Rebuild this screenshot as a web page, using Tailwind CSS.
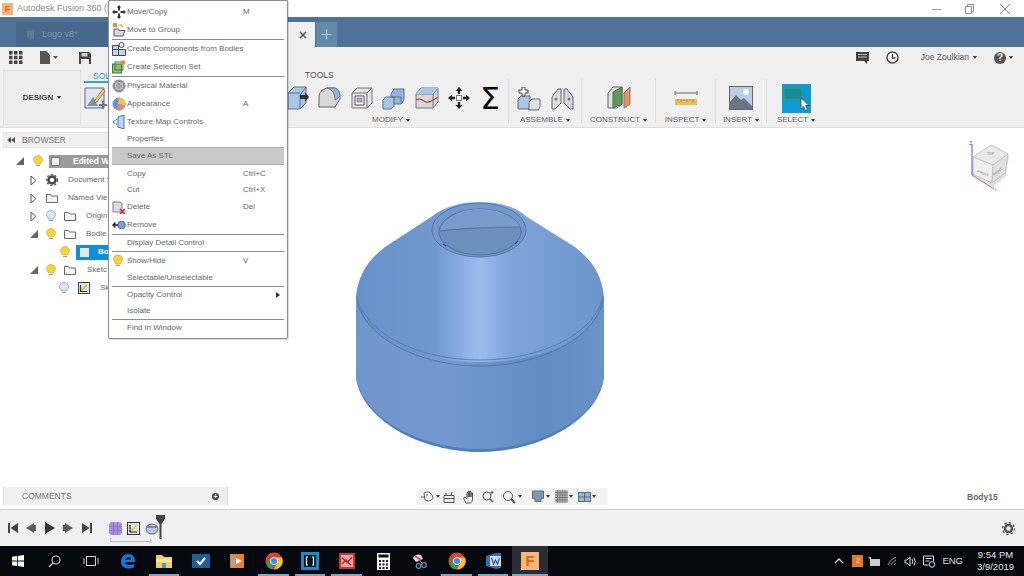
<!DOCTYPE html>
<html lang="en">
<head>
<meta charset="UTF-8">
<title>Autodesk Fusion 360</title>
<script src="https://cdn.jsdelivr.net/npm/@tailwindcss/browser@4"></script>
</head>
<body class="bg-white font-['Liberation_Sans',Arial,sans-serif] overflow-hidden">
<div class="relative w-[1024px] h-[576px] flex flex-col overflow-hidden text-[#555]">

  <!-- title bar -->
  <div class="h-[17px] bg-white flex items-center shrink-0">
    <div class="ml-[2px] w-[11px] h-[12px] bg-[#f5b27a] text-[#d8651c] text-[9px] font-bold leading-[12px] text-center">F</div>
    <span class="ml-[4px] text-[9px] text-[#888]">Autodesk Fusion 360 (E</span>
    <div class="ml-auto flex items-center text-[#888]">
      <svg width="12" height="12" class="mr-[21px]"><path d="M1 6.500h9" stroke="#999"/></svg>
      <svg width="12" height="12" class="mr-[23px]"><path d="M1.500 3.500h6v7h-6zM3.500 3.500v-2h6v7h-2" fill="none" stroke="#888"/></svg>
      <svg width="12" height="12" class="mr-[13px]"><path d="M1 1l10 10M11 1L1 11" stroke="#888"/></svg>
    </div>
  </div>

  <!-- tabs -->
  <div class="h-[30px] bg-[#4f7396] flex items-end shrink-0">
    <div class="ml-[16px] w-[272px] h-[25px] bg-[#46698b] flex items-center">
      <svg width="12" height="12" class="ml-[9px]"><path d="M2 2l7-1v9l-4 1-3-3z" fill="#64788c"/></svg>
      <span class="ml-[5px] text-[9px] text-[#7f95aa]">Logo v8*</span>
    </div>
    <div class="w-[27px] h-[25px] bg-[#f0f0f0] flex items-center justify-end pr-[7px] pt-[1px]">
      <svg width="10" height="10"><path d="M2 2l6 6M8 2L2 8" stroke="#555" stroke-width="1.600"/></svg>
    </div>
    <div class="ml-[1px] w-[21px] h-[25px] bg-[#648aa9] flex items-center justify-center">
      <svg width="11" height="11"><path d="M5.500 0.500v10M0.500 5.500h10" stroke="#b5c7d6" stroke-width="1.200"/></svg>
    </div>
  </div>

  <!-- quick access -->
  <div class="h-[21px] bg-[#f0f0f0] flex items-center shrink-0">
    <svg width="14" height="13" class="ml-[9px]" fill="#444"><path d="M0 0h3.500v3.500H0zM5 0h3.500v3.500H5zM10 0h3.500v3.500H10zM0 4.700h3.500v3.500H0zM5 4.700h3.500v3.500H5zM10 4.700h3.500v3.500H10zM0 9.400h3.500v3.500H0zM5 9.400h3.500v3.500H5zM10 9.400h3.500v3.500H10z"/></svg>
    <svg width="18" height="13" class="ml-[17px]" fill="#555"><path d="M0 0h6l4 4v9H0z"/><path d="M13 5h5l-2.500 3z"/></svg>
    <svg width="12" height="12" class="ml-[21px]"><path d="M0 0h10l2 2v10H0z" fill="#444"/><path d="M2.500 1h6v3.500h-6z" fill="#ccc"/><path d="M2 7h8v5H2z" fill="#eee"/></svg>
    <div class="ml-auto flex items-center">
      <svg width="13" height="12"><path d="M0 0h13v9h-2v3l-3-3H0z" fill="#444"/><path d="M2 2.500h9M2 5h9" stroke="#bbb"/></svg>
      <svg width="13" height="13" class="ml-[17px]"><circle cx="6.500" cy="6.500" r="5.500" fill="none" stroke="#444" stroke-width="1.400"/><path d="M6.500 3v4h3" fill="none" stroke="#444" stroke-width="1.300"/></svg>
      <span class="ml-[22px] text-[8.5px] text-[#555]">Joe Zoulkian</span>
      <span class="ml-[4px] w-0 h-0 border-x-[2.5px] border-x-transparent border-t-[3px] border-t-[#444]"></span>
      <div class="ml-[17px] w-[12px] h-[12px] rounded-full bg-[#555] text-white text-[10px] font-bold leading-[12px] text-center">?</div>
      <span class="ml-[3px] mr-[11px] w-0 h-0 border-x-[2.5px] border-x-transparent border-t-[3px] border-t-[#444]"></span>
    </div>
  </div>

  <!-- ribbon -->
  <div class="h-[60px] bg-[#f0f0f0] border-b border-[#dedede] flex shrink-0">
    <div class="ml-[3px] mt-[2px] w-[78px] h-[55px] bg-[#ededed] border border-[#e2e2e2] flex items-center justify-center gap-[4px]">
      <span class="text-[8px] font-bold text-[#444]">DESIGN</span>
      <span class="w-0 h-0 border-x-[2.5px] border-x-transparent border-t-[3px] border-t-[#333]"></span>
    </div>
    <div class="relative w-[430px] shrink-0">
      <span class="absolute left-[12px] top-[2px] text-[8.5px] text-[#2f9bd6]">SOL</span>
      <div class="absolute left-[3px] top-[13px] w-[26px] h-[2px] bg-[#35a0dc]"></div>
      <span class="absolute left-[224px] top-[1px] text-[8.5px] text-[#555]">TOOLS</span>
      <svg width="24" height="24" class="absolute left-[3px] top-[18px]"><path d="M1 2h19v20H1z" fill="#dfe6ee" stroke="#5b6b7c"/><path d="M3 20l6-9 5 9z" fill="#7c93ad"/><path d="M11 14l8-11 2 2-8 11-3 1z" fill="#f3c65c" stroke="#666" stroke-width=".6"/><path d="M19 15v8M15 19h8" stroke="#777" stroke-width="2"/></svg>

      <!-- modify icons -->
      <div class="absolute left-[206px] top-[17px] flex items-center">
        <svg width="22" height="26" viewBox="0 0 22 26"><path d="M1 8l6-6h12v16l-6 6H1z" fill="#a9c6e6" stroke="#5d7286"/><path d="M13 24V10l6-8" fill="none" stroke="#5d7286"/><path d="M1 8h12" stroke="#5d7286"/><path d="M13 10h5v-3l4 5-4 5v-3h-5z" fill="#333"/></svg>
        <svg width="24" height="24" viewBox="0 0 24 24" class="ml-[8px]"><path d="M2 21V11q0-7 8-9l8 0q5 2 5 8v3l-5 8z" fill="#d8d8d8" stroke="#666"/><path d="M10 2q8 2 8 12 3-1 5-4 0-6-5-8z" fill="#8fb6de" stroke="#666" stroke-width=".7"/></svg>
        <svg width="22" height="22" viewBox="0 0 22 22" class="ml-[10px]"><path d="M1 6l5-5h15v15l-5 5H1z" fill="#e4e4e4" stroke="#777"/><path d="M1 6h15v15M16 6l5-5" fill="none" stroke="#777"/><path d="M4 9h9v9H4z" fill="#fff" stroke="#555"/><path d="M6 11h5v4H6z" fill="#9cbcdb" stroke="#555" stroke-width=".6"/></svg>
        <svg width="24" height="24" viewBox="0 0 24 24" class="ml-[9px]"><path d="M1 14l3-3h8v9l-3 3H1z" fill="#a9c6e6" stroke="#5d7286"/><path d="M9 8l3-5h10v11l-3 4h-7v-7H9z" fill="#8fb6de" stroke="#5d7286"/><path d="M9 11h10v7" fill="none" stroke="#5d7286"/></svg>
        <svg width="24" height="22" viewBox="0 0 24 22" class="ml-[9px]"><path d="M1 7l5-6h17v14l-5 6H1z" fill="#d8d8d8" stroke="#777"/><path d="M1 7h17v14M18 7l5-6" fill="none" stroke="#777"/><path d="M6 1h17l-5 6H1z" fill="#a9c6e6"/><path d="M1 13q4-2 8 1t9-1l5-3" fill="none" stroke="#b0484e" stroke-width="1.200"/></svg>
        <svg width="22" height="22" viewBox="0 0 22 22" class="ml-[9px]"><path d="M11 0l3.500 4h-2.300v3h-2.400V4H7.500zM11 22l-3.500-4h2.300v-3h2.400v3h2.300zM0 11l4-3.500v2.300h3v2.400H4v2.300zM22 11l-4 3.500v-2.300h-3V9.800h3V7.500z" fill="#222"/><rect x="8.500" y="8.500" width="5" height="5" fill="#fff" stroke="#777"/></svg>
        <span class="ml-[10px] w-[20px] text-[31px] leading-[26px] text-center text-black font-['DejaVu_Sans',sans-serif]">Σ</span>
      </div>
      <div class="absolute left-[291px] top-[48px] flex items-center gap-[3px]">
        <span class="text-[8px] leading-none text-[#666]">MODIFY</span>
        <span class="w-0 h-0 border-x-[2.5px] border-x-transparent border-t-[3px] border-t-[#444]"></span>
      </div>
    </div>

    <!-- assemble -->
    <div class="w-[1px] h-[44px] mt-[11px] ml-[-3px] bg-[#e0e0e0]"></div>
    <div class="w-[72px] flex flex-col items-center pt-[18px] shrink-0">
      <div class="flex items-center gap-[10px] h-[26px]">
        <svg width="24" height="24" viewBox="0 0 24 24"><path d="M1 12l3-3h9v13H1z" fill="#a9c6e6" stroke="#667"/><path d="M12 15l3-3h8v8l-2 3h-9z" fill="#e2e2e2" stroke="#667"/><path d="M5 0h3v3h3v3H8v3H5V6H2V3h3z" fill="#fff" stroke="#444"/></svg>
        <svg width="23" height="22" viewBox="0 0 23 22"><path d="M1 9l6-8h3v14l-6 6H1z" fill="#ddd" stroke="#666"/><path d="M13 1h3l6 8v12h-3l-6-6z" fill="#cfd8e2" stroke="#666"/><circle cx="5" cy="11" r="1.500" fill="#777"/><circle cx="18" cy="11" r="1.500" fill="#777"/></svg>
      </div>
      <div class="mt-[4px] flex items-center gap-[3px]"><span class="text-[8px] leading-none text-[#666]">ASSEMBLE</span><span class="w-0 h-0 border-x-[2.5px] border-x-transparent border-t-[3px] border-t-[#444]"></span></div>
    </div>
    <div class="w-[1px] h-[44px] mt-[11px] bg-[#e0e0e0]"></div>

    <!-- construct -->
    <div class="w-[73px] flex flex-col items-center pt-[18px] shrink-0">
      <svg width="24" height="24" viewBox="0 0 24 24"><path d="M1 22V7l5-6h9v17l-5 4z" fill="#e3e3e3" stroke="#666"/><path d="M6 22V6l9-5v17z" fill="#5f9a55" stroke="#566"/><path d="M17 22V7l6-6v17z" fill="#e8935a" stroke="#777"/></svg>
      <div class="mt-[6px] flex items-center gap-[3px]"><span class="text-[8px] leading-none text-[#666]">CONSTRUCT</span><span class="w-0 h-0 border-x-[2.5px] border-x-transparent border-t-[3px] border-t-[#444]"></span></div>
    </div>
    <div class="w-[1px] h-[44px] mt-[11px] bg-[#e0e0e0]"></div>

    <!-- inspect -->
    <div class="w-[59px] flex flex-col items-center pt-[18px] shrink-0">
      <svg width="24" height="24" viewBox="0 0 24 24"><path d="M1 7h22M1 5v4M23 5v4" stroke="#666" fill="none"/><rect x="1" y="13" width="22" height="6" fill="#e8bf55"/><path d="M4 13v2M7 13v3M10 13v2M13 13v3M16 13v2M19 13v3" stroke="#8a6b20" stroke-width=".6"/></svg>
      <div class="mt-[6px] flex items-center gap-[3px]"><span class="text-[8px] leading-none text-[#666]">INSPECT</span><span class="w-0 h-0 border-x-[2.5px] border-x-transparent border-t-[3px] border-t-[#444]"></span></div>
    </div>
    <div class="w-[1px] h-[44px] mt-[11px] bg-[#e0e0e0]"></div>

    <!-- insert -->
    <div class="w-[50px] flex flex-col items-center pt-[18px] shrink-0">
      <svg width="24" height="24" viewBox="0 0 24 24"><rect x=".5" y=".5" width="23" height="23" fill="#b8cfe6" stroke="#666"/><circle cx="17" cy="6" r="3" fill="#f7f7f0"/><path d="M1 23V16l6-7 5 5 3-2 8 8v3z" fill="#6b7480"/></svg>
      <div class="mt-[6px] flex items-center gap-[3px]"><span class="text-[8px] leading-none text-[#666]">INSERT</span><span class="w-0 h-0 border-x-[2.5px] border-x-transparent border-t-[3px] border-t-[#444]"></span></div>
    </div>
    <div class="w-[1px] h-[44px] mt-[11px] bg-[#e0e0e0]"></div>

    <!-- select -->
    <div class="w-[58px] flex flex-col items-center pt-[18px] shrink-0">
      <svg width="29" height="29" viewBox="0 0 29 29" class="-mt-[2px] -mb-[3px]"><rect width="29" height="29" fill="#0d9bd8"/><rect x="2" y="4" width="18" height="11" fill="#1b8a9a" stroke="#3b9a5c" stroke-width="1.200"/><path d="M19 14v11l2.500-2.500 2 4 2-1-2-4h3.500z" fill="#fff" stroke="#333" stroke-width=".7"/></svg>
      <div class="mt-[6px] flex items-center gap-[3px]"><span class="text-[8px] leading-none text-[#666]">SELECT</span><span class="w-0 h-0 border-x-[2.5px] border-x-transparent border-t-[3px] border-t-[#444]"></span></div>
    </div>
  </div>

  <!-- canvas -->
  <div class="relative flex-1 bg-white">

    <!-- model -->
    <svg class="absolute left-[340px] top-[62px]" width="280" height="270" viewBox="340 190 280 270">
      <defs>
        <linearGradient id="cone" x1="0" x2="1" y1="0" y2="0">
          <stop offset="0" stop-color="#6791c8"/><stop offset=".32" stop-color="#7199d0"/><stop offset=".5" stop-color="#9cbdf0"/><stop offset=".62" stop-color="#7fa5da"/><stop offset="1" stop-color="#6c94cb"/>
        </linearGradient>
        <linearGradient id="wall" x1="0" x2="1" y1="0" y2="0">
          <stop offset="0" stop-color="#7096cc"/><stop offset=".4" stop-color="#7399ce"/><stop offset=".75" stop-color="#628cc2"/><stop offset="1" stop-color="#6a92c8"/>
        </linearGradient>
      </defs>
      <path d="M356 297V378C362 420 420 452 480 452S598 420 604 378V297Z" fill="#4f7fb8"/>
      <path d="M356 297V376C362 418 420 449 480 449S598 418 604 376V297Z" fill="url(#wall)"/>
      <path d="M356 297C358 275 368 260 385 247L431 217C445 206 462 202 480 202S515 206 527 217L575 247C592 260 602 275 604 297C600 335 550 362 480 362S360 335 356 297Z" fill="url(#cone)"/>
      <path d="M357 300C364 338 420 366 480 366S596 338 603 300" fill="none" stroke="#4e78b0" stroke-width="1"/>
      <path d="M357 296C364 334 420 360 480 360S596 334 603 296" fill="none" stroke="#577fb6" stroke-width="1"/>
      <ellipse cx="479" cy="230" rx="47" ry="27" fill="#7398cc" stroke="#5278ad"/>
      <ellipse cx="480" cy="232" rx="41" ry="23" fill="#6d8fc0" stroke="#4f75aa"/>
      <path d="M440 230C462 228 498 227 520 227C514 216 498 209 480 209S446 216 440 230Z" fill="#7a9ccb"/>
      <path d="M440 231C462 228 498 227 520 227" fill="none" stroke="#4f72a5"/>
      <path d="M443 244l3 2M515 244l3-3" stroke="#2c4f80" stroke-width="1.200"/>
    </svg>

    <!-- view cube -->
    <svg class="absolute left-[965px] top-[12px]" width="48" height="52" viewBox="0 0 48 52">
      <path d="M6 36L9 18 24 8l20 8-3 20-14 12z" fill="#c9ccd0" opacity=".6"/>
      <path d="M8 17L26 5l17 9-15 11z" fill="#e9e9e9" stroke="#c4c4c4"/>
      <path d="M8 17l20 8-1 18-19-9z" fill="#efefef" stroke="#c4c4c4"/>
      <path d="M28 25l15-11-3 19-13 10z" fill="#e0e0e0" stroke="#c4c4c4"/>
      <text x="22" y="15" font-size="3.500" fill="#777">TOP</text>
      <text x="12" y="32" font-size="3.500" fill="#777" transform="rotate(22 12 32)">FRONT</text>
      <text x="29" y="36" font-size="3.500" fill="#777" transform="rotate(-38 29 36)">RIGHT</text>
      <path d="M7 4v31" stroke="#5a5ad0" stroke-width="1"/>
      <path d="M7 35l22 14" stroke="#e06868" stroke-width="1"/>
      <text x="4" y="5" font-size="5" fill="#5555cc">Z</text>
      <text x="29" y="51" font-size="4" fill="#e06868">X</text>
    </svg>

    <!-- browser -->
    <div class="absolute left-[3px] top-[4px] w-[112px]">
      <div class="h-[16px] bg-[#f0f0f0] border border-[#e4e4e4] flex items-center pl-[3px]">
        <svg width="8" height="6" fill="#555"><path d="M4 0v6L0 3zM8 0v6L4 3z"/></svg>
        <span class="ml-[7px] text-[8.5px] text-[#777]">BROWSER</span>
      </div>
      <div class="relative h-[150px] text-[8px] text-[#666]">
        <div class="absolute left-[12px] top-[4px] w-[99px] h-[18px] flex items-center">
          <svg width="10" height="10" fill="#666"><path d="M9 1v8H1z"/></svg>
          <svg width="10" height="12" class="ml-[8px]"><path d="M5 .5C7.500 .5 9.500 2.300 9.500 4.700 9.500 6.500 8 7.300 7.500 9H2.500C2 7.300 .5 6.500 .5 4.700 .5 2.300 2.500 .5 5 .5z" fill="#f5d23e" stroke="#c9a93a" stroke-width=".6"/><path d="M3 10.500h4" stroke="#999"/></svg>
          <div class="ml-[6px] flex-1 h-[13px] bg-[#9a9a9a] flex items-center pl-[2px]">
            <div class="w-[9px] h-[9px] bg-[#eee] border border-[#777]"></div>
            <span class="ml-[13px] font-bold text-white text-[8.5px]">Edited W</span>
          </div>
        </div>
        <div class="absolute left-[27px] top-[23px] h-[18px] w-[84px] flex items-center">
          <svg width="7" height="11" class="shrink-0"><path d="M1 1l5 4.500L1 10z" fill="#fff" stroke="#555"/></svg>
          <svg width="12" height="12" class="ml-[9px] shrink-0"><circle cx="6" cy="6" r="3.500" fill="none" stroke="#444" stroke-width="2.500"/><circle cx="6" cy="6" r="5.500" fill="none" stroke="#444" stroke-width="1.200" stroke-dasharray="2 2"/></svg>
          <span class="ml-[10px] whitespace-nowrap overflow-hidden">Document S</span>
        </div>
        <div class="absolute left-[27px] top-[41px] h-[18px] w-[84px] flex items-center">
          <svg width="7" height="11" class="shrink-0"><path d="M1 1l5 4.500L1 10z" fill="#fff" stroke="#555"/></svg>
          <svg width="12" height="10" class="ml-[9px] shrink-0"><path d="M.5 1.500h4l1 1.500h6v6.500H.5z" fill="#f5f5f5" stroke="#666"/></svg>
          <span class="ml-[10px] whitespace-nowrap overflow-hidden">Named Vie</span>
        </div>
        <div class="absolute left-[27px] top-[59px] h-[18px] w-[84px] flex items-center">
          <svg width="7" height="11" class="shrink-0"><path d="M1 1l5 4.500L1 10z" fill="#fff" stroke="#555"/></svg>
          <svg width="10" height="12" class="ml-[9px] shrink-0"><path d="M5 .5C7.500 .5 9.500 2.300 9.500 4.700 9.500 6.500 8 7.300 7.500 9H2.500C2 7.300 .5 6.500 .5 4.700 .5 2.300 2.500 .5 5 .5z" fill="#dbe8f5" stroke="#7b9dc2" stroke-width=".8"/><path d="M3 10.500h4" stroke="#999"/></svg>
          <svg width="12" height="10" class="ml-[8px] shrink-0"><path d="M.5 1.500h4l1 1.500h6v6.500H.5z" fill="#f5f5f5" stroke="#666"/></svg>
          <span class="ml-[10px] whitespace-nowrap overflow-hidden">Origin</span>
        </div>
        <div class="absolute left-[26px] top-[77px] h-[18px] w-[85px] flex items-center">
          <svg width="10" height="10" class="shrink-0" fill="#666"><path d="M9 1v8H1z"/></svg>
          <svg width="10" height="12" class="ml-[7px] shrink-0"><path d="M5 .5C7.500 .5 9.500 2.300 9.500 4.700 9.500 6.500 8 7.300 7.500 9H2.500C2 7.300 .5 6.500 .5 4.700 .5 2.300 2.500 .5 5 .5z" fill="#f5d23e" stroke="#c9a93a" stroke-width=".6"/><path d="M3 10.500h4" stroke="#999"/></svg>
          <svg width="12" height="10" class="ml-[8px] shrink-0"><path d="M.5 1.500h4l1 1.500h6v6.500H.5z" fill="#f5f5f5" stroke="#666"/></svg>
          <span class="ml-[10px] whitespace-nowrap overflow-hidden">Bodie</span>
        </div>
        <div class="absolute left-[57px] top-[95px] h-[18px] w-[54px] flex items-center">
          <svg width="10" height="12" class="shrink-0"><path d="M5 .5C7.500 .5 9.500 2.300 9.500 4.700 9.500 6.500 8 7.300 7.500 9H2.500C2 7.300 .5 6.500 .5 4.700 .5 2.300 2.500 .5 5 .5z" fill="#f5d23e" stroke="#c9a93a" stroke-width=".6"/><path d="M3 10.500h4" stroke="#999"/></svg>
          <div class="ml-[6px] flex-1 h-[15px] bg-[#0d8fdc] flex items-center pl-[4px]">
            <div class="w-[9px] h-[9px] bg-[#e8e8e8]"></div>
            <span class="ml-[9px] text-white font-bold">Bo</span>
          </div>
        </div>
        <div class="absolute left-[26px] top-[113px] h-[18px] w-[85px] flex items-center">
          <svg width="10" height="10" class="shrink-0" fill="#666"><path d="M9 1v8H1z"/></svg>
          <svg width="10" height="12" class="ml-[7px] shrink-0"><path d="M5 .5C7.500 .5 9.500 2.300 9.500 4.700 9.500 6.500 8 7.300 7.500 9H2.500C2 7.300 .5 6.500 .5 4.700 .5 2.300 2.500 .5 5 .5z" fill="#f5d23e" stroke="#c9a93a" stroke-width=".6"/><path d="M3 10.500h4" stroke="#999"/></svg>
          <svg width="12" height="10" class="ml-[8px] shrink-0"><path d="M.5 1.500h4l1 1.500h6v6.500H.5z" fill="#f5f5f5" stroke="#666"/></svg>
          <span class="ml-[11px] whitespace-nowrap overflow-hidden">Sketc</span>
        </div>
        <div class="absolute left-[56px] top-[131px] h-[18px] w-[55px] flex items-center">
          <svg width="10" height="12" class="shrink-0"><path d="M5 .5C7.500 .5 9.500 2.300 9.500 4.700 9.500 6.500 8 7.300 7.500 9H2.500C2 7.300 .5 6.500 .5 4.700 .5 2.300 2.500 .5 5 .5z" fill="#dbe8f5" stroke="#7b9dc2" stroke-width=".8"/><path d="M3 10.500h4" stroke="#999"/></svg>
          <svg width="12" height="12" class="ml-[9px] shrink-0"><rect x=".5" y=".5" width="11" height="11" fill="#e4e9ef" stroke="#445"/><path d="M3 9l6-6" stroke="#e2b93a" stroke-width="2"/><path d="M2.500 3v6.500H9" fill="none" stroke="#334" stroke-width="1.200"/></svg>
          <span class="ml-[10px]">Sk</span>
        </div>
      </div>
    </div>

    <!-- comments -->
    <div class="absolute left-[3px] top-[359px] w-[225px] h-[18px] bg-[#f0f0f0] border-x border-[#d8d8d8] flex items-center">
      <span class="ml-[18px] text-[8.5px] text-[#777]">COMMENTS</span>
      <div class="ml-auto mr-[8px] w-[7px] h-[7px] rounded-full bg-[#444] text-white text-[7px] font-bold leading-[7px] text-center">+</div>
    </div>

    <!-- nav bar -->
    <div class="absolute left-[417px] top-[360px] w-[190px] h-[17px] bg-[#f3f3f3] flex items-center pl-[3px]">
      <svg width="14" height="14" viewBox="0 0 14 14" fill="none" stroke="#666"><path d="M4 3q5-3 8 2t-4 6l-3-1zM1 7h4M7 4v2"/></svg>
      <span class="ml-[2px] w-0 h-0 border-x-[2px] border-x-transparent border-t-[3px] border-t-[#444]"></span>
      <svg width="12" height="12" class="ml-[3px]" fill="none" stroke="#555"><path d="M1 4.500h10v7H1zM3 4.500V2M1 7.500h10M8 4.500L9 1"/></svg>
      <svg width="14" height="14" class="ml-[7px]" viewBox="0 0 14 14" fill="none" stroke="#555"><path d="M4 13L1.500 8 3 7l2 2V2.500h1.300V7V1h1.300v6V1.500H9V7V3h1.500v6q0 3-2 4z"/></svg>
      <svg width="13" height="13" class="ml-[6px]" viewBox="0 0 13 13" fill="none" stroke="#555"><circle cx="5" cy="6" r="4"/><path d="M8 9l3 3" stroke-width="1.500"/><path d="M10 1v3M8.500 2.500h3"/></svg>
      <svg width="14" height="14" class="ml-[7px]" viewBox="0 0 14 14" fill="none" stroke="#555"><circle cx="6" cy="6" r="4.500"/><path d="M9 9l4 4" stroke-width="1.800"/></svg>
      <span class="ml-[2px] w-0 h-0 border-x-[2px] border-x-transparent border-t-[3px] border-t-[#444]"></span>
      <svg width="13" height="13" class="ml-[10px]"><path d="M.5 1h11v7.500H9v3H3v-3H.5z" fill="#7f97b3" stroke="#5a6b7e"/></svg>
      <span class="ml-[1px] w-0 h-0 border-x-[2px] border-x-transparent border-t-[3px] border-t-[#444]"></span>
      <svg width="13" height="13" class="ml-[5px]"><path d="M0 0h13v13H0z" fill="#bbb"/><path d="M2.500 0v13M5 0v13M7.500 0v13M10 0v13M0 2.500h13M0 5h13M0 7.500h13M0 10h13" stroke="#666" stroke-width=".7"/></svg>
      <span class="ml-[1px] w-0 h-0 border-x-[2px] border-x-transparent border-t-[3px] border-t-[#444]"></span>
      <svg width="13" height="10" class="ml-[5px]"><rect x=".5" y=".5" width="12" height="9" fill="#9db6d3" stroke="#5a6b7e"/><path d="M6.500 0v10M0 5h13" stroke="#5a6b7e"/></svg>
      <span class="ml-[1px] w-0 h-0 border-x-[2px] border-x-transparent border-t-[3px] border-t-[#444]"></span>
    </div>

    <span class="absolute left-[967px] top-[363px] text-[8.5px] font-bold text-[#666]">Body15</span>
  </div>

  <!-- timeline -->
  <div class="h-[37px] bg-[#f0f0f0] border-t border-[#cfcfcf] flex items-center shrink-0">
    <svg width="10" height="10" class="ml-[8px]" fill="#444"><path d="M0 0h2v10H0zM10 0v10L2.500 5z"/></svg>
    <svg width="10" height="10" class="ml-[8px]" fill="#444"><path d="M8 0v10L0 5zM8 2h2v6H8z" opacity=".85"/></svg>
    <svg width="10" height="12" class="ml-[9px]" fill="#333"><path d="M0 0l10 6-10 6z"/></svg>
    <svg width="10" height="10" class="ml-[8px]" fill="#444"><path d="M2 0v10l8-5zM0 2h2v6H0z" opacity=".85"/></svg>
    <svg width="10" height="10" class="ml-[9px]" fill="#444"><path d="M0 0v10l7.500-5zM8 0h2v10H8z"/></svg>
    <div class="relative ml-[17px] w-[56px] h-[30px] flex items-center gap-[5px]">
      <svg width="13" height="13"><rect width="13" height="13" rx="3" fill="#a78fdc"/><path d="M0 4.500h13M0 8.500h13M4.500 0v13M8.500 0v13" stroke="#8468c4" stroke-width=".7"/></svg>
      <svg width="13" height="13"><rect x=".5" y=".5" width="12" height="12" fill="#e3e8ee" stroke="#334"/><path d="M3 10l7-7" stroke="#f1c93a" stroke-width="2.200"/><path d="M3 3v7h7" fill="none" stroke="#223" stroke-width="1.200"/></svg>
      <svg width="14" height="13"><ellipse cx="7" cy="7" rx="6" ry="5" fill="#b4c9e2" stroke="#667"/><path d="M2 5h10" stroke="#445"/></svg>
      <div class="absolute left-[1px] right-[14px] bottom-[1px] h-[4px] border border-t-0 border-[#bbb]"></div>
      <svg width="10" height="24" class="absolute left-[47px] top-[2px]" fill="#444"><path d="M0 0h9v4L5.500 9V24H3.500V9L0 4z"/></svg>
    </div>
    <svg width="13" height="13" viewBox="0 0 13 13" class="ml-auto mr-[9px]"><circle cx="6.500" cy="6.500" r="3.500" fill="none" stroke="#555" stroke-width="2.400"/><circle cx="6.500" cy="6.500" r="5.800" fill="none" stroke="#555" stroke-width="1.400" stroke-dasharray="2.200 2.300"/></svg>
  </div>

  <!-- taskbar -->
  <div class="h-[30px] bg-[#05080d] flex items-center shrink-0 text-white">
    <div class="w-[36px] h-full flex items-center justify-center"><svg width="12" height="12" fill="#fff"><path d="M0 1.800l5-.7v4.500H0zM5.800 1l6.200-1v5.600H5.800zM0 6.400h5v4.500l-5-.7zM5.800 6.400H12V12l-6.200-1z"/></svg></div>
    <div class="w-[37px] h-full flex items-center justify-center"><svg width="13" height="13" fill="none" stroke="#ddd" stroke-width="1.100"><circle cx="8" cy="5" r="4"/><path d="M5 8l-4 4"/></svg></div>
    <div class="w-[36px] h-full flex items-center justify-center"><svg width="16" height="12" fill="none" stroke="#ccc"><rect x="3.500" y="1.500" width="9" height="9"/><path d="M1 3v6M15 3v6"/></svg></div>
    <div class="w-[37px] h-full flex items-center justify-center"><svg width="16" height="16" viewBox="0 0 16 16"><path d="M1 9C1 4 4 1 8.500 1 13 1 15 4 15 9H5c.3 3 4.500 4 9 2v3.500C8 17 1 15 1 9zM5 6.500h6C11 3.500 6 3.500 5 6.500z" fill="#1479d6"/></svg></div>
    <div class="relative w-[36px] h-full flex items-center justify-center"><svg width="16" height="13"><path d="M0 0h6l2 2h8v11H0z" fill="#f5cf5f"/><path d="M0 4h16v3H0z" fill="#f9e6a5"/><path d="M6 8h4v5H6z" fill="#38a3d8"/></svg><div class="absolute left-[3px] right-[3px] bottom-0 h-[2px] bg-[#7ba6cc]"></div></div>
    <div class="w-[37px] h-full flex items-center justify-center"><svg width="18" height="14"><rect width="18" height="14" fill="#245d96"/><path d="M5 7l3 3 5-6" fill="none" stroke="#fff" stroke-width="2"/></svg></div>
    <div class="w-[36px] h-full flex items-center justify-center"><svg width="14" height="14"><rect width="14" height="14" fill="#e8832a"/><rect x="1" y="1" width="4" height="12" fill="#a9a29a"/><path d="M6 4l6 3-6 3z" fill="#fff"/></svg></div>
    <div class="relative w-[37px] h-full flex items-center justify-center">
      <svg width="18" height="18" viewBox="0 0 18 18"><circle cx="9" cy="9" r="8.500" fill="#db4437"/><path d="M1.500 13L5 5l4 9-2 3.500A8.500 8.500 0 0 1 1.500 13z" fill="#2f9e50"/><path d="M9 5.500h8a8.500 8.500 0 0 1-8 12l3-6z" fill="#fbc02d"/><circle cx="9" cy="9" r="3.800" fill="#fff"/><circle cx="9" cy="9" r="3" fill="#4285f4"/></svg>
      <div class="absolute left-[3px] right-[3px] bottom-0 h-[2px] bg-[#7ba6cc]"></div>
    </div>
    <div class="relative w-[36px] h-full flex items-center justify-center">
      <svg width="18" height="18"><rect width="18" height="18" fill="#1f8bc4"/><rect x="3" y="3" width="12" height="12" fill="#0a1722"/><path d="M7 5H5.500v8H7M11 5h1.500v8H11" fill="none" stroke="#fff" stroke-width="1.200"/></svg>
      <div class="absolute left-[3px] right-[3px] bottom-0 h-[2px] bg-[#7ba6cc]"></div>
    </div>
    <div class="relative w-[37px] h-full flex items-center justify-center">
      <svg width="16" height="16"><rect width="16" height="16" fill="#c2393c"/><rect x="2" y="2" width="12" height="12" fill="#e5a6a2"/><path d="M3 11l4-4 2 2 4-5M3 5l9 7" fill="none" stroke="#a32528" stroke-width="1.300"/></svg>
      <div class="absolute left-[3px] right-[3px] bottom-0 h-[2px] bg-[#7ba6cc]"></div>
    </div>
    <div class="w-[37px] h-full flex items-center justify-center"><svg width="13" height="17"><rect width="13" height="17" fill="#f5f5f5"/><rect x="1.500" y="1.500" width="10" height="3" fill="#111"/><path d="M2 7h2v2H2zM5.500 7h2v2h-2zM9 7h2v2H9zM2 10.500h2v2H2zM5.500 10.500h2v2h-2zM9 10.500h2v2H9zM2 14h2v2H2zM5.500 14h2v2h-2zM9 14h2v2H9z" fill="#222"/></svg></div>
    <div class="w-[36px] h-full flex items-center justify-center"><svg width="17" height="17" viewBox="0 0 17 17"><path d="M1 5q3-5 8-3l2 4-7 3z" fill="#ddd"/><path d="M3 3l6 4" stroke="#c2505a" stroke-width="2"/><circle cx="12" cy="12" r="2.300" fill="none" stroke="#5c8fc0" stroke-width="1.300"/><circle cx="6.500" cy="13" r="2.300" fill="none" stroke="#5c8fc0" stroke-width="1.300"/><path d="M8 8l3 3" stroke="#9ab" /></svg></div>
    <div class="relative w-[37px] h-full flex items-center justify-center">
      <svg width="18" height="18" viewBox="0 0 18 18"><circle cx="9" cy="9" r="8.500" fill="#db4437"/><path d="M1.500 13L5 5l4 9-2 3.500A8.500 8.500 0 0 1 1.500 13z" fill="#2f9e50"/><path d="M9 5.500h8a8.500 8.500 0 0 1-8 12l3-6z" fill="#fbc02d"/><circle cx="9" cy="9" r="3.800" fill="#fff"/><circle cx="9" cy="9" r="3" fill="#4285f4"/></svg>
      <div class="absolute left-[3px] right-[3px] bottom-0 h-[2px] bg-[#7ba6cc]"></div>
    </div>
    <div class="relative w-[36px] h-full flex items-center justify-center">
      <svg width="17" height="16"><path d="M1 3l10-3h5v15l-5 1-10-3z" fill="#3b6db5"/><rect x="5" y="3" width="11" height="10" fill="#cfdcf0"/><path d="M6.500 5l2 6 2-4 2 4 2-6" fill="none" stroke="#2b5797" stroke-width="1.200"/></svg>
      <div class="absolute left-[3px] right-[3px] bottom-0 h-[2px] bg-[#7ba6cc]"></div>
    </div>
    <div class="relative ml-[1px] w-[36px] h-full bg-[#2a2e33] flex items-center justify-center">
      <div class="w-[18px] h-[18px] bg-[#f6b778] text-[#d8651c] text-[15px] font-bold leading-[18px] text-center">F</div>
      <div class="absolute left-0 right-0 bottom-0 h-[2px] bg-[#7ba6cc]"></div>
    </div>

    <div class="ml-auto flex items-center h-full text-[#ddd]">
      <svg width="10" height="6" fill="none" stroke="#ddd" stroke-width="1.300"><path d="M1 5l4-4 4 4"/></svg>
      <div class="ml-[8px] w-[11px] h-[12px] bg-[#e8762a] text-[7px] text-[#fde2c5] leading-[12px] text-center">2</div>
      <svg width="12" height="9" class="ml-[5px]"><path d="M0 0h3v2h9v7H2V2z" fill="#ccc"/></svg>
      <svg width="12" height="10" class="ml-[7px]" fill="none" stroke="#999"><path d="M1 9q1-5 8-8M4 9q1-3 5-5M7 9q.5-1 2-2"/></svg>
      <svg width="12" height="11" class="ml-[5px]" fill="none" stroke="#ddd"><path d="M1 4h2l3-3v9L3 7H1zM8 3q1.500 2.500 0 5M10 1.500q2.500 4 0 8"/></svg>
      <svg width="13" height="13" class="ml-[7px]" fill="none" stroke="#ddd"><path d="M.5 1h10v5.500M.5 1v9h5M2.500 3.500h6M2.500 6h4"/><circle cx="9" cy="9.500" r="2.800"/></svg>
      <span class="ml-[6px] text-[9.500px] text-[#ddd]">ENG</span>
      <div class="ml-[14px] mr-[10px] flex flex-col items-center text-[9.500px] leading-[12px] text-[#e6e6e6]">
        <span>9:54 PM</span>
        <span>3/9/2019</span>
      </div>
    </div>
  </div>

  <!-- context menu -->
  <div class="absolute left-[108px] top-0 w-[180px] h-[339px] bg-white border border-[#8e8e8e] rounded-b-[2px] pt-[2px] px-[3px] text-[8px] text-[#666] shadow-[1px_1px_1px_rgba(0,0,0,.15)]">
    <div class="h-[18px] flex items-center">
      <svg width="14" height="14" viewBox="0 0 14 14" fill="#333"><path d="M7 0l2.200 2.500H8v3H6v-3H4.800zM7 14l-2.200-2.500H6v-3h2v3h1.200zM0 7l2.500-2.200V6h3v2h-3v1.200zM14 7l-2.500 2.200V8h-3V6h3V4.800z"/></svg>
      <span class="ml-[1px] w-[116px]">Move/Copy</span><span>M</span>
    </div>
    <div class="h-[18px] flex items-center">
      <svg width="14" height="14" viewBox="0 0 14 14"><rect x="1" y="0" width="4" height="4" fill="#e8893a"/><path d="M2 6h4l1 1.500h6L11 13H2z" fill="#d8dde3" stroke="#556"/><path d="M7 2h3v3" fill="none" stroke="#e8893a"/></svg>
      <span class="ml-[1px]">Move to Group</span>
    </div>
    <div class="h-px bg-[#8e8e8e]"></div>
    <div class="h-[18px] flex items-center">
      <svg width="14" height="14" viewBox="0 0 14 14"><path d="M.5 3.500h6v4h-6zM.5 7.500h6v6h-6zM6.500 7.500h7v6h-7z" fill="#c4d5e8" stroke="#445"/><circle cx="9.500" cy="3" r="2.500" fill="#fff" stroke="#445"/></svg>
      <span class="ml-[1px]">Create Components from Bodies</span>
    </div>
    <div class="h-[18px] flex items-center">
      <svg width="14" height="14" viewBox="0 0 14 14"><rect x=".5" y="4" width="9" height="9" fill="#8cc07c" stroke="#3a7a3a"/><rect x="3" y="2" width="8" height="8" fill="none" stroke="#3a7a3a"/><circle cx="11" cy="2.500" r="2.300" fill="#e8893a"/></svg>
      <span class="ml-[1px]">Create Selection Set</span>
    </div>
    <div class="h-px bg-[#8e8e8e]"></div>
    <div class="h-[18px] flex items-center">
      <svg width="14" height="14" viewBox="0 0 14 14"><circle cx="7" cy="7" r="6.500" fill="#8c9097"/><circle cx="7" cy="7" r="3.500" fill="none" stroke="#d4d7db"/><path d="M2 3l10 8M12 3L2 11" stroke="#d4d7db" stroke-width=".6"/></svg>
      <span class="ml-[1px]">Physical Material</span>
    </div>
    <div class="h-[18px] flex items-center">
      <svg width="14" height="14" viewBox="0 0 14 14"><circle cx="7" cy="7" r="6.500" fill="#6e8fce"/><path d="M7 .5a6.500 6.500 0 0 1 6.300 8L6 7z" fill="#f0c447"/><path d="M13.300 8.500A6.500 6.500 0 0 1 4 12.800L6 7z" fill="#d78a8a"/></svg>
      <span class="ml-[1px] w-[116px]">Appearance</span><span>A</span>
    </div>
    <div class="h-[18px] flex items-center">
      <svg width="14" height="14" viewBox="0 0 14 14"><path d="M6 2l6-2v14l-6-2z" fill="#bcd3ea" stroke="#3b78b5"/><path d="M5 4L1 7l4 3" fill="none" stroke="#3b78b5"/></svg>
      <span class="ml-[1px]">Texture Map Controls</span>
    </div>
    <div class="h-[16px] flex items-center pl-[15px]">Properties</div>
    <div class="h-[18px] flex items-center pl-[15px] bg-[#c9c9c9] border-y border-[#a9a9a9]">Save As STL</div>
    <div class="h-[17px] flex items-center pl-[15px]"><span class="w-[116px]">Copy</span><span>Ctrl+C</span></div>
    <div class="h-[16px] flex items-center pl-[15px]"><span class="w-[116px]">Cut</span><span>Ctrl+X</span></div>
    <div class="h-[18px] flex items-center">
      <svg width="14" height="14" viewBox="0 0 14 14"><path d="M1 2h7l2 2v8H1z" fill="#d9dde2" stroke="#7a828c"/><path d="M8 9l5 5M13 9l-5 5" stroke="#c8282a" stroke-width="1.600"/></svg>
      <span class="ml-[1px] w-[116px]">Delete</span><span>Del</span>
    </div>
    <div class="h-[18px] flex items-center">
      <svg width="14" height="14" viewBox="0 0 14 14"><circle cx="9.500" cy="7" r="3.800" fill="#7fa3d2" stroke="#48688f"/><path d="M6 7H2M3.500 4.500L1 7l2.500 2.500" fill="none" stroke="#222" stroke-width="1.400"/></svg>
      <span class="ml-[1px]">Remove</span>
    </div>
    <div class="h-px bg-[#8e8e8e]"></div>
    <div class="h-[16px] flex items-center pl-[15px]">Display Detail Control</div>
    <div class="h-px bg-[#8e8e8e]"></div>
    <div class="h-[17px] flex items-center">
      <svg width="14" height="14" viewBox="0 0 14 14"><path d="M6 1C8.800 1 10.500 3 10.500 5.200 10.500 7.200 9 8 8.500 10H3.500C3 8 1.500 7.200 1.500 5.200 1.500 3 3.200 1 6 1z" fill="#f5d23e" stroke="#c9a93a" stroke-width=".7"/><path d="M4 11.500h4" stroke="#999"/></svg>
      <span class="ml-[1px] w-[116px]">Show/Hide</span><span>V</span>
    </div>
    <div class="h-[17px] flex items-center pl-[15px]">Selectable/Unselectable</div>
    <div class="h-px bg-[#8e8e8e]"></div>
    <div class="h-[16px] flex items-center pl-[15px]">Opacity Control
      <span class="ml-auto mr-[4px] w-0 h-0 border-y-[3px] border-y-transparent border-l-[4px] border-l-[#333]"></span>
    </div>
    <div class="h-[16px] flex items-center pl-[15px]">Isolate</div>
    <div class="h-px bg-[#8e8e8e]"></div>
    <div class="h-[16px] flex items-center pl-[15px]">Find in Window</div>
  </div>
</div>
</body>
</html>
